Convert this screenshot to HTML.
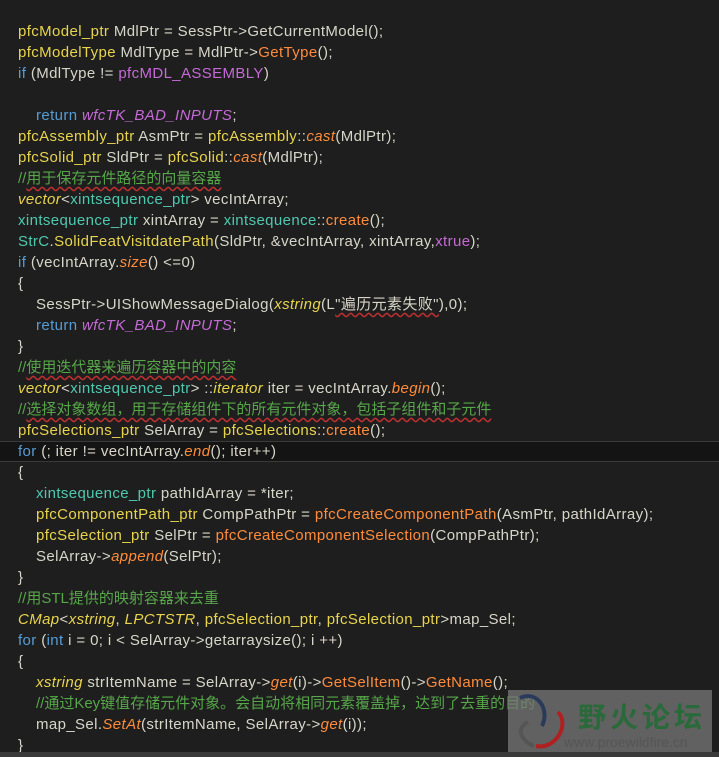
<!DOCTYPE html>
<html><head><meta charset="utf-8"><style>
body{margin:0;width:719px;height:757px;background:#1e1e1e;overflow:hidden;position:relative;font-family:"Liberation Sans","Noto Sans CJK SC",sans-serif;font-size:15px;color:#d6d6c8;letter-spacing:0.38px}
.l{position:absolute;left:18px;height:21px;line-height:21px;white-space:pre}
.i{left:36px}
.t{color:#e8d44d}.x{color:#4ec9b0}.f{color:#ff8c3a}.p{color:#c56ad6}.k{color:#569cd6}.c{color:#57a64a;letter-spacing:0}.it{font-style:italic}
.sq{text-decoration:underline wavy #c03030;text-underline-offset:3px}
.cur{position:absolute;left:0;top:441px;width:719px;height:19px;background:#141414;border-top:1px solid #3a3a3a;border-bottom:1px solid #3a3a3a}
.wm{position:absolute;left:508px;top:690px;width:204px;height:62px;background:rgba(120,120,120,.75);letter-spacing:0}
.bot{position:absolute;left:0;top:752px;width:719px;height:5px;background:#3a3a3a}
</style></head><body>
<div class="cur"></div>
<div class="l" style="top:21px"><span class="t">pfcModel_ptr</span> MdlPtr = SessPtr-&gt;GetCurrentModel();</div>
<div class="l" style="top:42px"><span class="t">pfcModelType</span> MdlType = MdlPtr-&gt;<span class="f">GetType</span>();</div>
<div class="l" style="top:63px"><span class="k">if</span> (MdlType != <span class="p">pfcMDL_ASSEMBLY</span>)</div>
<div class="l i" style="top:105px"><span class="k">return</span> <span class="p it">wfcTK_BAD_INPUTS</span>;</div>
<div class="l" style="top:126px"><span class="t">pfcAssembly_ptr</span> AsmPtr = <span class="t">pfcAssembly</span>::<span class="f it">cast</span>(MdlPtr);</div>
<div class="l" style="top:147px"><span class="t">pfcSolid_ptr</span> SldPtr = <span class="t">pfcSolid</span>::<span class="f it">cast</span>(MdlPtr);</div>
<div class="l c" style="top:168px">//<span class="sq">用于保存元件路径的向量容器</span></div>
<div class="l" style="top:189px"><span class="t it">vector</span>&lt;<span class="x">xintsequence_ptr</span>&gt; vecIntArray;</div>
<div class="l" style="top:210px"><span class="x">xintsequence_ptr</span> xintArray = <span class="x">xintsequence</span>::<span class="f">create</span>();</div>
<div class="l" style="top:231px"><span class="x">StrC</span>.<span class="t">SolidFeatVisitdatePath</span>(SldPtr, &amp;vecIntArray, xintArray,<span class="p">xtrue</span>);</div>
<div class="l" style="top:252px"><span class="k">if</span> (vecIntArray.<span class="f it">size</span>() &lt;=0)</div>
<div class="l" style="top:273px">{</div>
<div class="l i" style="top:294px">SessPtr-&gt;UIShowMessageDialog(<span class="t it">xstring</span>(L<span class="sq">"遍历元素失败"</span>),0);</div>
<div class="l i" style="top:315px"><span class="k">return</span> <span class="p it">wfcTK_BAD_INPUTS</span>;</div>
<div class="l" style="top:336px">}</div>
<div class="l c" style="top:357px">//<span class="sq">使用迭代器来遍历容器中的内容</span></div>
<div class="l" style="top:378px"><span class="t it">vector</span>&lt;<span class="x">xintsequence_ptr</span>&gt; ::<span class="t it">iterator</span> iter = vecIntArray.<span class="f it">begin</span>();</div>
<div class="l c" style="top:399px">//<span class="sq">选择对象数组，用于存储组件下的所有元件对象，包括子组件和子元件</span></div>
<div class="l" style="top:420px"><span class="t">pfcSelections_ptr</span> SelArray = <span class="t">pfcSelections</span>::<span class="f">create</span>();</div>
<div class="l" style="top:441px"><span class="k">for</span> (; iter != vecIntArray.<span class="f it">end</span>(); iter++)</div>
<div class="l" style="top:462px">{</div>
<div class="l i" style="top:483px"><span class="x">xintsequence_ptr</span> pathIdArray = *iter;</div>
<div class="l i" style="top:504px"><span class="t">pfcComponentPath_ptr</span> CompPathPtr = <span class="f">pfcCreateComponentPath</span>(AsmPtr, pathIdArray);</div>
<div class="l i" style="top:525px"><span class="t">pfcSelection_ptr</span> SelPtr = <span class="f">pfcCreateComponentSelection</span>(CompPathPtr);</div>
<div class="l i" style="top:546px">SelArray-&gt;<span class="f it">append</span>(SelPtr);</div>
<div class="l" style="top:567px">}</div>
<div class="l c" style="top:588px">//用STL提供的映射容器来去重</div>
<div class="l" style="top:609px"><span class="t it">CMap</span>&lt;<span class="t it">xstring</span>, <span class="t it">LPCTSTR</span>, <span class="t">pfcSelection_ptr</span>, <span class="t">pfcSelection_ptr</span>&gt;map_Sel;</div>
<div class="l" style="top:630px"><span class="k">for</span> (<span class="k">int</span> i = 0; i &lt; SelArray-&gt;getarraysize(); i ++)</div>
<div class="l" style="top:651px">{</div>
<div class="l i" style="top:672px"><span class="t it">xstring</span> strItemName = SelArray-&gt;<span class="f it">get</span>(i)-&gt;<span class="f">GetSelItem</span>()-&gt;<span class="f">GetName</span>();</div>
<div class="l i c" style="top:693px">//通过Key键值存储元件对象。会自动将相同元素覆盖掉，达到了去重的目的</div>
<div class="l i" style="top:714px">map_Sel.<span class="f it">SetAt</span>(strItemName, SelArray-&gt;<span class="f it">get</span>(i));</div>
<div class="l" style="top:735px">}</div>
<div class="wm">
<svg style="position:absolute;left:0;top:0" width="70" height="62"><path d="M12 8 C30 0 42 20 34 36" stroke="#2a3a5a" stroke-width="4" fill="none"/><path d="M50 22 C62 34 48 60 28 56" stroke="#b02020" stroke-width="4" fill="none"/><path d="M26 56 C12 50 8 38 20 32" stroke="#555" stroke-width="4" fill="none"/></svg>
<div style="position:absolute;left:70px;top:6px;font-size:28px;font-weight:bold;color:#2a6a3a;letter-spacing:4px">野火论坛</div>
<div style="position:absolute;left:56px;top:44px;font-size:14px;color:#555">www.proewildfire.cn</div>
</div>
<div class="bot"></div>
</body></html>
